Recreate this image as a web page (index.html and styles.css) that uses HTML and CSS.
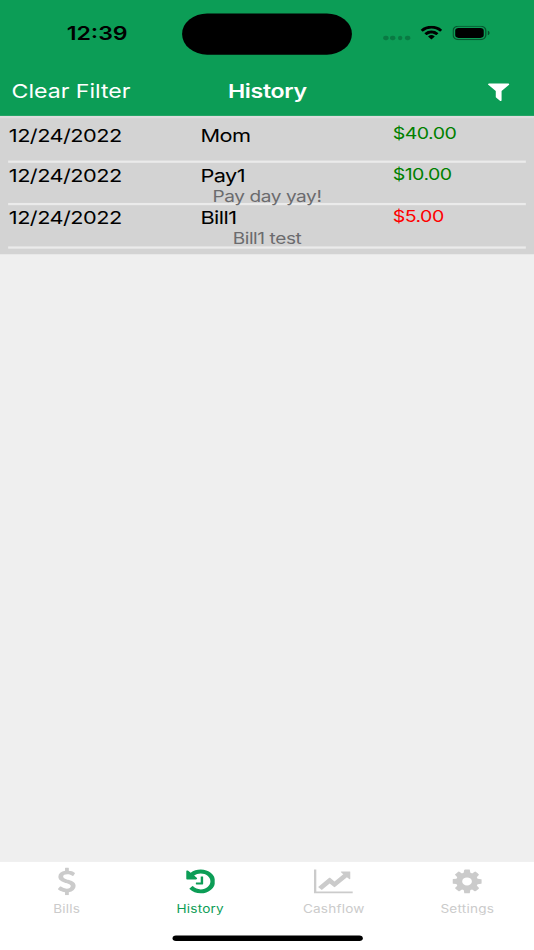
FILE: index.html
```
<!DOCTYPE html>
<html lang="en">
  <head>
    <meta charset="UTF-8" />
    <meta name="viewport" content="width=device-width, initial-scale=1.0" />
    <title>History</title>
    <link rel="stylesheet" href="styles.css">
  </head>
  <body>
    <div class="screen">
      <div class="header">
        <div class="status-bar">
          <span class="time">12:39</span>
          <div class="island"></div>
          <div class="status-icons">
            <div class="signal"><i></i><i></i><i></i><i></i></div>
            <svg class="wifi" viewBox="0 0 17 12" preserveAspectRatio="none">
              <path d="M8.5 2.4c2.3 0 4.5.9 6.2 2.5.1.1.3.1.4 0l1.2-1.2c.1-.1.1-.3 0-.4a11.3 11.3 0 0 0-15.6 0c-.1.1-.1.3 0 .4l1.2 1.2c.1.1.3.1.4 0A9 9 0 0 1 8.5 2.4zm0 4c1.2 0 2.4.5 3.4 1.3.1.1.3.1.4 0l1.2-1.2c.1-.1.1-.3 0-.5a7.3 7.3 0 0 0-10 0c-.1.2-.1.4 0 .5l1.2 1.2c.1.1.3.1.4 0 1-.8 2.2-1.3 3.4-1.3zm2.3 2.800c.1-.1.1-.3 0-.4a3.600 3.600 0 0 0-4.600 0c-.1.1-.1.3 0 .4l2.100 2.100c.1.1.3.1.4 0z" />
            </svg>
            <svg class="battery" viewBox="0 0 27.500 13">
              <rect x=".5" y=".5" width="24" height="12" rx="3.800" fill="none" stroke="#000" opacity=".45" />
              <path d="M26 4.500v4c.8-.3 1.300-1.100 1.300-2s-.5-1.700-1.300-2z" opacity=".5" />
              <rect x="2" y="2" width="21" height="9" rx="2.500" />
            </svg>
          </div>
        </div>
        <div class="nav-bar">
          <a class="clear">Clear Filter</a>
          <span class="title">History</span>
          <svg class="filter" viewBox="0 0 1408 1792">
            <path d="M1403 295q17 41-14 70l-493 493v742q0 42-39 59-13 5-25 5-27 0-45-19l-256-256q-19-19-19-45v-486l-493-493q-31-29-14-70 17-39 59-39h1280q42 0 59 39z" />
          </svg>
        </div>
      </div>

      <div class="list">
        <div class="row first">
          <span class="date">12/24/2022</span>
          <span class="name">Mom</span>
          <span class="amount">$40.00</span>
        </div>
        <div class="row">
          <span class="date">12/24/2022</span>
          <span class="name">Pay1</span>
          <span class="amount">$10.00</span>
          <span class="note">Pay day yay!</span>
        </div>
        <div class="row">
          <span class="date">12/24/2022</span>
          <span class="name">Bill1</span>
          <span class="amount expense">$5.00</span>
          <span class="note">Bill1 test</span>
        </div>
      </div>

      <div class="tab-bar">
        <div class="tabs">
          <a class="tab">
            <svg viewBox="0 0 1024 1792">
              <path d="M978 1185q0 153-99.500 263.500t-258.500 136.500v175q0 14-9 23t-23 9h-135q-13 0-22.500-9.500t-9.500-22.500v-175q-66-9-127.500-31t-101.500-44.500-74-48-46.500-37.500-17.500-18q-17-21-2-41l103-135q7-10 23-12 15-2 24 9l2 2q113 99 243 125 37 8 74 8 81 0 142.500-43t61.500-122q0-28-15-53t-33.500-42-58.500-37.500-66-32-80-32.500q-39-16-61.500-25t-61.500-26.500-62.500-31-56.500-35.500-53.500-42.500-43.500-49-35.500-58-21-66.500-8.500-78q0-138 98-242t255-134v-180q0-13 9.500-22.500t22.500-9.500h135q14 0 23 9t9 23v176q57 6 110.500 23t87 33.500 63.500 37.500 39 29 15 14q17 18 5 38l-81 146q-8 15-23 16-14 3-27-7-3-3-14.500-12t-39-26.500-58.500-32-74.500-26-85.500-11.500q-95 0-155 43t-60 111q0 26 8.500 48t29.500 41.500 39.500 33 56 31 60.500 27 70 27.500q53 20 81 31.500t76 35 75.500 42.500 62 50 53 63.500 31.500 76.500 13 94z" />
            </svg>
            <span>Bills</span>
          </a>
          <a class="tab active">
            <svg viewBox="0 0 1536 1792">
              <path d="M1536 896q0 156-61 298t-164 245-245 164-298 61q-172 0-327-72.500t-264-204.500q-7-10-6.500-22.500t8.500-20.500l137-138q10-9 25-9 16 2 23 12 73 95 179 147t225 52q104 0 198.500-40.500t163.500-109.500 109.500-163.500 40.500-198.500-40.500-198.500-109.500-163.500-163.500-109.500-198.500-40.500q-98 0-188 35.500t-160 101.500l137 138q31 30 14 69-17 40-59 40h-448q-26 0-45-19t-19-45v-448q0-42 40-59 39-17 69 14l130 129q107-101 244.500-156.500t284.500-55.500q156 0 298 61t245 164 164 245 61 298zm-640-288v448q0 14-9 23t-23 9h-320q-14 0-23-9t-9-23v-64q0-14 9-23t23-9h224v-352q0-14 9-23t23-9h64q14 0 23 9t9 23z" />
            </svg>
            <span>History</span>
          </a>
          <a class="tab">
            <svg viewBox="0 0 2048 1792">
              <path d="M2048 1536v128h-2048v-1536h128v1408h1920zm-128-1248v435q0 21-19.500 29.500t-35.500-7.500l-121-121-633 633q-10 10-23 10t-23-10l-233-233-416 416-192-192 585-585q10-10 23-10t23 10l233 233 464-464-121-121q-16-16-7.500-35.500t29.500-19.500h435q14 0 23 9t9 23z" />
            </svg>
            <span>Cashflow</span>
          </a>
          <a class="tab">
            <svg viewBox="0 0 1536 1792">
              <path d="M1024 896q0-106-75-181t-181-75-181 75-75 181 75 181 181 75 181-75 75-181zm512-109v222q0 12-8 23t-20 13l-185 28q-19 54-39 91 35 50 107 138 10 12 10 25t-9 23q-27 37-99 108t-94 71q-12 0-26-9l-138-108q-44 23-91 38-16 136-29 186-7 28-36 28h-222q-14 0-24.500-8.500t-11.500-21.500l-28-184q-49-16-90-37l-141 107q-10 9-25 9-14 0-25-11-126-114-165-168-7-10-7-23 0-12 8-23 15-21 51-66.500t54-70.500q-27-50-41-99l-183-27q-13-2-21-12.500t-8-23.500v-222q0-12 8-23t19-13l186-28q14-46 39-92-40-57-107-138-10-12-10-24 0-10 9-23 26-36 98.500-107.500t94.500-71.500q13 0 26 10l138 107q44-23 91-38 16-136 29-186 7-28 36-28h222q14 0 24.500 8.500t11.500 21.500l28 184q49 16 90 37l142-107q9-9 24-9 13 0 25 10 129 119 165 170 7 8 7 22 0 12-8 23-15 21-51 66.500t-54 70.500q26 50 41 98l183 28q13 2 21 12.500t8 23.500z" />
            </svg>
            <span>Settings</span>
          </a>
        </div>
        <div class="home-indicator"></div>
      </div>
    </div>
  </body>
</html>
```
FILE: styles.css
```
:root {
  --green: #0c9d56;
  --inactive: #cbcbcb;
}

* {
  box-sizing: border-box;
}

body {
  margin: 0;
  width: 534px;
  height: 950px;
  overflow: hidden;
  font-family: Inter, "Liberation Sans", sans-serif;
}

.screen {
  width: 393px;
  height: 852px;
  transform: scale(1.3588, 1.11502);
  transform-origin: 0 0;
  display: flex;
  flex-direction: column;
  background: #efefef;
}

.header {
  height: 104px;
  background: var(--green);
  flex-shrink: 0;
}

.status-bar {
  height: 59px;
  padding-top: 11px;
  display: grid;
  grid-template-columns: 134px 125px 134px;
}

.time {
  padding: 9px 0 0 9px;
  text-align: center;
  font-size: 17px;
  line-height: 21px;
  font-weight: 600;
}

.island {
  height: 37px;
  margin-top: 0.5px;
  border-radius: 19px;
  background: #000;
}

.status-icons {
  display: flex;
  align-items: flex-start;
  padding: 12px 0 0 23px;
}

.signal {
  display: flex;
  gap: 1.4px;
  padding-top: 9px;
}

.signal i {
  width: 3.9px;
  height: 3.600px;
  border-radius: 1.600px;
  background: rgba(0, 0, 0, 0.22);
}

.wifi {
  width: 17px;
  height: 13px;
  margin-left: 7px;
}

.battery {
  width: 27.500px;
  height: 13px;
  margin-left: 7.500px;
}

.nav-bar {
  height: 45px;
  padding: 1px 18px 0 8.500px;
  display: grid;
  grid-template-columns: 1fr auto 1fr;
  align-items: center;
  color: #fff;
  font-size: 17px;
}

.title {
  font-weight: 600;
  margin-left: 10px;
  letter-spacing: -0.25px;
}

.filter {
  justify-self: end;
  width: 16px;
  height: 20px;
  fill: #fff;
}

.list {
  height: 124px;
  padding: 1px 6px 0;
  background: #d3d3d3;
  border-top: 2px solid #dddddd;
}

.row {
  height: 38.600px;
  padding-top: 1px;
  display: grid;
  grid-template-columns: 141.500px 141.500px 1fr;
  grid-template-rows: 20px 16px;
  border-bottom: 2px solid #ebebeb;
  font-size: 16px;
  line-height: 20px;
  letter-spacing: -0.4px;
}

.row.first {
  padding-top: 4px;
}

.date {
  padding-left: 0.500px;
}

.amount {
  font-size: 14.400px;
  line-height: 18px;
  color: #008000;
}

.expense {
  color: #ff0000;
}

.note {
  grid-column: 1 / -1;
  text-align: center;
  font-size: 14px;
  line-height: 17px;
  letter-spacing: -0.3px;
  color: #6b6b6e;
}

.tab-bar {
  height: 79px;
  margin-top: auto;
  background: #fff;
}

.tabs {
  height: 66px;
  padding-top: 5px;
  display: grid;
  grid-template-columns: repeat(4, 1fr);
}

.tab {
  display: flex;
  flex-direction: column;
  align-items: center;
  font-size: 10px;
  line-height: 12px;
  letter-spacing: 0.15px;
  color: var(--inactive);
}

.tab svg {
  height: 25px;
  fill: currentColor;
  margin-bottom: 6px;
}

.tab.active {
  color: var(--green);
}

.home-indicator {
  width: 140px;
  height: 5px;
  margin: 0 auto;
  border-radius: 3px;
  background: #000;
}
```
